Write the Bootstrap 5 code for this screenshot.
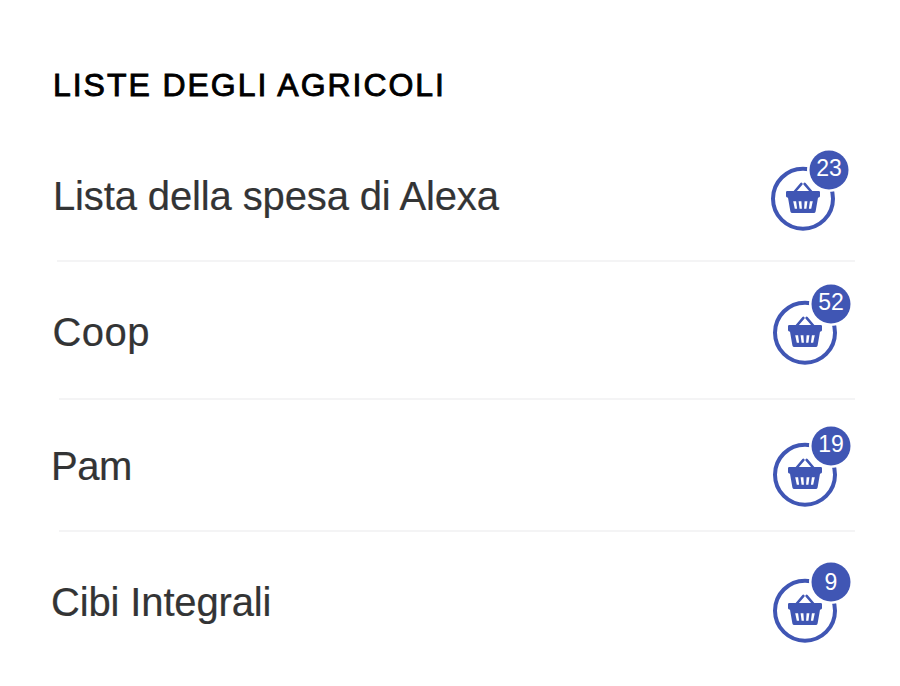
<!DOCTYPE html>
<html lang="it">
<head>
<meta charset="utf-8">
<meta name="viewport" content="width=device-width, initial-scale=1">
<title>Liste degli agricoli</title>
<link href="https://cdn.jsdelivr.net/npm/bootstrap@5.3.0/dist/css/bootstrap.min.css" rel="stylesheet">
<style>
  body { font-family: "Liberation Sans", Arial, sans-serif; color: #333435; background: #fff; }
  .lists { width: 900px; height: 686px; padding: 65px 45px 0 51px; }
  .lists-title { font-size: 32px; line-height: 40px; height: 67px; letter-spacing: 1.95px; padding-left: 2px; color: #000; font-weight: 400; -webkit-text-stroke: .9px #000; }
  .list-line { height: var(--h); }
  .list-name { font-size: 40px; line-height: 48px; margin-top: var(--text); padding-left: var(--x, 0); letter-spacing: var(--ls, 0); -webkit-text-stroke: .2px #333435; }
  .divider { height: 2px; background: #f4f4f5; margin-left: 8px; }
  .basket { width: 82px; height: 84px; margin-top: var(--icon); margin-right: 2px; color: #4056b4; }
  .basket-count { top: var(--count, 2px); left: 40px; width: 40px; height: 40px; line-height: 37px; font-size: 23px; }
  .r1 { --h: 128px; --text: 40px; --icon: 16px; --x: 2px; --ls: -.13px; }
  .r1 .basket { margin-right: 4px; }
  .r1 + .divider { margin-left: 6px; }
  .r2 { --h: 136px; --text: 46px; --icon: 20px; --x: 1.4px; --ls: .5px; }
  .r3 { --h: 130px; --text: 42px; --icon: 24px; --ls: -.5px; }
  .r4 { --h: 154px; --text: 46px; --icon: 28px; --ls: -.14px; --count: 4px; }
</style>
</head>
<body>
<svg class="d-none" xmlns="http://www.w3.org/2000/svg">
  <symbol id="basket" viewBox="0 0 82 84">
    <circle cx="34" cy="50.7" r="30" fill="none" stroke="currentColor" stroke-width="4"/>
    <circle cx="60" cy="22" r="22" fill="#fff"/>
    <circle cx="60" cy="22" r="19.5" fill="currentColor"/>
    <path d="M25 44.5 32.4 35.9M43 44.5 35.6 35.9" fill="none" stroke="currentColor" stroke-width="2.6" stroke-linecap="round"/>
    <path fill="currentColor" fill-rule="evenodd" d="M18.2 43H49.8Q51 43 51 44.2V48Q51 49.2 49.8 49.5L49 49.8 46.6 63.4Q46.3 65 44.7 65H23.3Q21.7 65 21.4 63.4L19 49.8 18.2 49.5Q17 49.2 17 48V44.2Q17 43 18.2 43ZM24.2 53.3H27.1L28.1 60.7H25.8ZM29.6 53.3H32.4L32.9 60.7H30.6ZM35.6 53.3H38.4L37.4 60.7H35.1ZM40.9 53.3H43.8L42.2 60.7H39.9Z"/>
  </symbol>
</svg>
<main class="lists">
  <h1 class="lists-title mb-0 text-nowrap">LISTE DEGLI AGRICOLI</h1>
  <div class="list-line r1 d-flex justify-content-between align-items-start">
    <span class="list-name text-nowrap">Lista della spesa di Alexa</span>
    <div class="basket position-relative"><svg class="d-block" width="82" height="84"><use href="#basket"/></svg><span class="basket-count position-absolute text-center text-white">23</span></div>
  </div>
  <div class="divider"></div>
  <div class="list-line r2 d-flex justify-content-between align-items-start">
    <span class="list-name text-nowrap">Coop</span>
    <div class="basket position-relative"><svg class="d-block" width="82" height="84"><use href="#basket"/></svg><span class="basket-count position-absolute text-center text-white">52</span></div>
  </div>
  <div class="divider"></div>
  <div class="list-line r3 d-flex justify-content-between align-items-start">
    <span class="list-name text-nowrap">Pam</span>
    <div class="basket position-relative"><svg class="d-block" width="82" height="84"><use href="#basket"/></svg><span class="basket-count position-absolute text-center text-white">19</span></div>
  </div>
  <div class="divider"></div>
  <div class="list-line r4 d-flex justify-content-between align-items-start">
    <span class="list-name text-nowrap">Cibi Integrali</span>
    <div class="basket position-relative"><svg class="d-block" width="82" height="84"><use href="#basket"/></svg><span class="basket-count position-absolute text-center text-white">9</span></div>
  </div>
</main>
<script src="https://cdn.jsdelivr.net/npm/bootstrap@5.3.0/dist/js/bootstrap.bundle.min.js"></script>
</body>
</html>
